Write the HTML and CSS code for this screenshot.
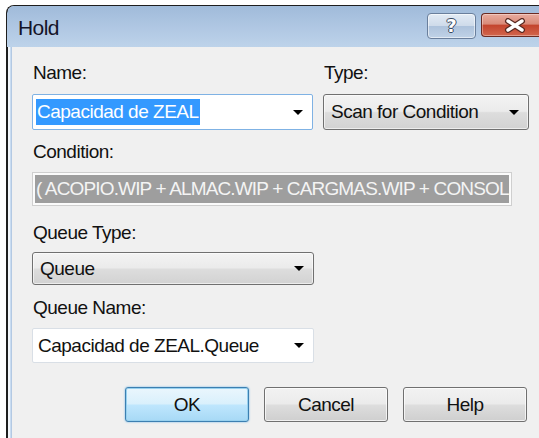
FILE: index.html
```html
<!DOCTYPE html>
<html lang="en">
<head>
<meta charset="utf-8">
<title>Hold</title>
<link rel="stylesheet" href="styles.css">
</head>
<body>
<div class="window">
  <div class="titlebar">
    <span class="title">Hold</span>
    <div class="caption-buttons">
      <div class="cap cap-help"><span class="qmark">?</span></div>
      <div class="cap cap-close">
        <svg width="22" height="15" viewBox="0 0 22 15">
          <path d="M4 3 L18 12 M18 3 L4 12" stroke="#5a2a22" stroke-width="6" stroke-linecap="round"/>
          <path d="M4 3 L18 12 M18 3 L4 12" stroke="#ffffff" stroke-width="3.4" stroke-linecap="round"/>
        </svg>
      </div>
    </div>
  </div>
  <div class="client">
    <div class="top-row">
      <div class="field name-col">
        <div class="label">Name:</div>
        <div class="combo edit focused">
          <span class="selection">Capacidad de ZEAL</span>
          <span class="arrow"></span>
        </div>
      </div>
      <div class="field type-col">
        <div class="label">Type:</div>
        <div class="combo drop">
          <span>Scan for Condition</span>
          <span class="arrow"></span>
        </div>
      </div>
    </div>

    <div class="label label-condition">Condition:</div>
    <div class="condition"><span>( ACOPIO.WIP + ALMAC.WIP + CARGMAS.WIP + CONSOL</span></div>

    <div class="label label-qtype">Queue Type:</div>
    <div class="combo drop queue-type">
      <span>Queue</span>
      <span class="arrow"></span>
    </div>

    <div class="label label-qname">Queue Name:</div>
    <div class="combo edit queue-name">
      <span>Capacidad de ZEAL.Queue</span>
      <span class="arrow"></span>
    </div>

    <div class="buttons">
      <div class="btn btn-default">OK</div>
      <div class="btn">Cancel</div>
      <div class="btn">Help</div>
    </div>
  </div>
</div>
</body>
</html>
```

FILE: styles.css
```css
html, body {
  margin: 0;
  padding: 0;
  background: #ffffff;
  overflow: hidden;
}

body {
  font-family: "Liberation Sans", Arial, sans-serif;
  font-size: 19px;
  letter-spacing: -0.5px;
  color: #111;
}

/* window frame */
.window {
  margin: 5px 0 0 6px;
  width: 540px;
  height: 440px;
  border: 1px solid #1e1e1e;
  border-right: none;
  border-bottom: none;
  border-radius: 8px 0 0 0;
  background: linear-gradient(to right, #1e1e1e 0, #1e1e1e 1px, #f3f7fb 1px, #f3f7fb 3px, #c9dcf1 3px);
  overflow: hidden;
  display: flex;
  flex-direction: column;
}

.titlebar {
  height: 41px;
  flex: none;
  display: flex;
  align-items: flex-start;
  justify-content: space-between;
  background: linear-gradient(#a0bbda, #b2c9e4 60%, #bdd3ea);
  border-radius: 7px 0 0 0;
}

.title {
  margin: 10px 0 0 11px;
  font-size: 21px;
  letter-spacing: -0.6px;
  line-height: 24px;
  color: #141428;
}

.caption-buttons {
  display: flex;
  gap: 5px;
  margin: 7px 0 0 0;
}

.cap {
  height: 24px;
  border-radius: 4px;
  display: flex;
  align-items: center;
  justify-content: center;
}

.cap-help {
  width: 47px;
  border: 1px solid #6a7f9c;
  background: linear-gradient(#e2ebf5 0%, #cfdbea 48%, #aec3dc 52%, #c0d2e7 100%);
  box-shadow: inset 0 0 0 1px rgba(255, 255, 255, 0.55);
}

.qmark {
  font-family: "DejaVu Sans", sans-serif;
  font-weight: bold;
  font-size: 18px;
  letter-spacing: 0;
  color: #ffffff;
  text-shadow: 1px 0 #3a4a62, -1px 0 #3a4a62, 0 1px #3a4a62, 0 -1px #3a4a62;
  line-height: 20px;
}

.cap-close {
  width: 66px;
  border: 1px solid #6b2b22;
  border-right: none;
  border-radius: 4px 0 0 4px;
  background: linear-gradient(#e9ac9f 0%, #d98b79 45%, #c4452e 52%, #d2664d 100%);
  box-shadow: inset 0 0 0 1px rgba(255, 255, 255, 0.35);
  justify-content: flex-start;
  padding-left: 22px;
  box-sizing: border-box;
}

/* dialog client area */
.client {
  flex: 1;
  margin-left: 4px;
  border-left: 1px solid #b3c9e3;
  background: #f0f0f0;
  padding: 16px 0 0 20px;
  display: flex;
  flex-direction: column;
  align-items: flex-start;
}

.label {
  line-height: 20px;
  height: 20px;
  padding-left: 1px;
}

.top-row {
  display: flex;
  gap: 10px;
}

.field {
  display: flex;
  flex-direction: column;
  gap: 11px;
}

.combo {
  box-sizing: border-box;
  display: flex;
  align-items: center;
  justify-content: space-between;
  border-radius: 2px;
}

.arrow {
  width: 0;
  height: 0;
  border-left: 5px solid transparent;
  border-right: 5px solid transparent;
  border-top: 5px solid #000;
  flex: none;
}

.combo.edit {
  background: #ffffff;
  border: 1px solid #d9dfe6;
  padding: 0 9px 0 3px;
}

.combo.edit.focused {
  border-color: #7fb2e4;
}

.name-col .combo {
  width: 281px;
  height: 36px;
}

.selection {
  background: #3399ff;
  color: #ffffff;
  line-height: 26px;
  padding: 0 1px;
}

.combo.drop {
  border: 1px solid #707070;
  border-radius: 3px;
  background: linear-gradient(#f3f3f3 0%, #ebebeb 48%, #dddddd 52%, #d2d2d2 100%);
  box-shadow: inset 0 0 0 1px rgba(255, 255, 255, 0.6);
  padding: 0 9px 0 7px;
}

.type-col .combo {
  width: 206px;
  height: 36px;
}

.label-condition {
  margin-top: 12px;
}

.condition {
  margin-top: 10px;
  width: 480px;
  height: 34px;
  box-sizing: border-box;
  border: 1px solid #cfcfcf;
  padding: 2px;
  background: #fbfbfb;
  display: flex;
}

.condition span {
  flex: 1;
  background: #9e9e9e;
  color: #f4f4f4;
  line-height: 28px;
  letter-spacing: -0.85px;
  white-space: nowrap;
  overflow: hidden;
  padding-left: 1px;
}

.label-qtype {
  margin-top: 17px;
}

.queue-type {
  margin-top: 9px;
  width: 282px;
  height: 33px;
}

.label-qname {
  margin-top: 13px;
}

.queue-name {
  margin-top: 10px;
  width: 282px;
  height: 35px;
}

.combo.edit.queue-name {
  padding-left: 5px;
}

/* push buttons */
.buttons {
  margin: 24px 0 0 93px;
  display: flex;
  gap: 15px;
}

.btn {
  width: 124px;
  height: 35px;
  box-sizing: border-box;
  border: 1px solid #707070;
  border-radius: 3px;
  background: linear-gradient(#f2f2f2 0%, #ebebeb 48%, #dddddd 52%, #cfcfcf 100%);
  box-shadow: inset 0 0 0 1px rgba(255, 255, 255, 0.7);
  display: flex;
  align-items: center;
  justify-content: center;
}

.btn-default {
  border-color: #3c7fb1;
  background: linear-gradient(#eaf6fd 0%, #d9f0fc 48%, #bee6fd 52%, #a7d9f5 100%);
  box-shadow: inset 0 0 0 1px #98d1ef, 0 0 2px #5fb0e6;
}
```
